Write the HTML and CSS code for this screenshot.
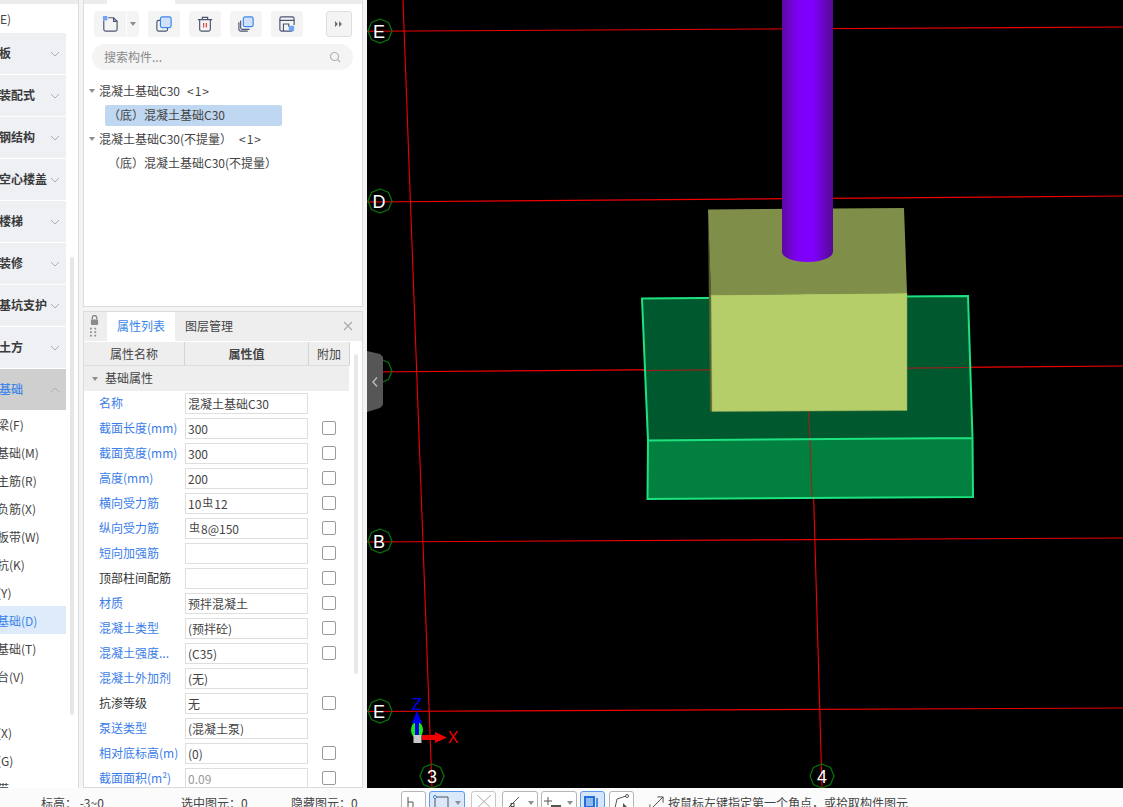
FILE: index.html
```html
<!DOCTYPE html>
<html lang="zh-CN">
<head>
<meta charset="utf-8">
<title>构件属性</title>
<link rel="stylesheet" href="styles.css">
</head>
<body>
<div class="app">
  <div class="main">
    <aside class="nav">
      <div class="nav-top"></div>
      <div class="nav-first">(E)</div>
      <div class="group"><span>板</span><svg class="chev" viewBox="0 0 10 6"><path d="M1 1l4 4 4-4"/></svg></div>
      <div class="group"><span>装配式</span><svg class="chev" viewBox="0 0 10 6"><path d="M1 1l4 4 4-4"/></svg></div>
      <div class="group"><span>钢结构</span><svg class="chev" viewBox="0 0 10 6"><path d="M1 1l4 4 4-4"/></svg></div>
      <div class="group"><span>空心楼盖</span><svg class="chev" viewBox="0 0 10 6"><path d="M1 1l4 4 4-4"/></svg></div>
      <div class="group"><span>楼梯</span><svg class="chev" viewBox="0 0 10 6"><path d="M1 1l4 4 4-4"/></svg></div>
      <div class="group"><span>装修</span><svg class="chev" viewBox="0 0 10 6"><path d="M1 1l4 4 4-4"/></svg></div>
      <div class="group"><span>基坑支护</span><svg class="chev" viewBox="0 0 10 6"><path d="M1 1l4 4 4-4"/></svg></div>
      <div class="group"><span>土方</span><svg class="chev" viewBox="0 0 10 6"><path d="M1 1l4 4 4-4"/></svg></div>
      <div class="group group-open"><span>基础</span><svg class="chev" viewBox="0 0 10 6"><path d="M1 5l4-4 4 4"/></svg></div>
      <div class="sub">梁(F)</div>
      <div class="sub">基础(M)</div>
      <div class="sub">主筋(R)</div>
      <div class="sub">负筋(X)</div>
      <div class="sub">板带(W)</div>
      <div class="sub">抗(K)</div>
      <div class="sub">(Y)</div>
      <div class="sub sub-active">基础(D)</div>
      <div class="sub">基础(T)</div>
      <div class="sub">台(V)</div>
      <div class="sub"></div>
      <div class="sub">(X)</div>
      <div class="sub">(G)</div>
      <div class="sub">带</div>
      <div class="nav-thumb"></div>
    </aside>

    <div class="panels">
      <section class="tree-panel">
        <div class="strip"><span class="strip-dots"></span><span class="strip-tab"></span></div>
        <div class="toolbar">
          <div class="tool tool-split">
            <span class="tool-main">
              <svg class="ico" viewBox="0 0 18 18"><path class="s" d="M2 5v10a2 2 0 0 0 2 2h11a2 2 0 0 0 2-2V6l-4-4H7"/><path class="s" d="M13 2v4h4"/><rect class="b" x="1" y="0" width="5" height="5"/></svg>
            </span>
            <span class="tool-drop"><i class="caret"></i></span>
          </div>
          <div class="tool"><svg class="ico" viewBox="0 0 18 18"><rect class="s" x="1" y="5" width="12" height="12" rx="2"/><rect class="bs" x="5" y="1" width="12" height="12" rx="2"/></svg></div>
          <div class="tool"><svg class="ico" viewBox="0 0 18 18"><path class="s" d="M3 4v11a2 2 0 0 0 2 2h8a2 2 0 0 0 2-2V4M1 4h16M6 4V1.500h6V4"/><path class="r" d="M7.500 8v5M10.500 8v5"/></svg></div>
          <div class="tool"><svg class="ico" viewBox="0 0 18 18"><path class="s" d="M1 7v8a2 2 0 0 0 2 2h8M3 5v8a2 2 0 0 0 2 2h8"/><rect class="bs" x="6" y="1" width="11" height="11" rx="2"/></svg></div>
          <div class="tool"><svg class="ico" viewBox="0 0 18 18"><path class="s" d="M15 17H3a2 2 0 0 1-2-2V3a2 2 0 0 1 2-2h12a2 2 0 0 1 2 2v7"/><path class="s" d="M1 5h16M5 17V9h6v3"/><rect class="b" x="11" y="11" width="6" height="6"/></svg></div>
          <div class="tool tool-more"><svg class="ico-more" viewBox="0 0 8 6"><path d="M0 0l3 3-3 3zM4 0l3 3-3 3z"/></svg></div>
        </div>
        <div class="search">
          <span>搜索构件...</span>
          <svg class="search-ico" viewBox="0 0 12 12"><circle cx="5.500" cy="5.500" r="4"/><path d="M8.500 8.500l2.500 2.500"/></svg>
        </div>
        <div class="tree">
          <div class="tree-row"><i class="caret tree-caret"></i>混凝土基础C30<span class="count">&lt;1&gt;</span></div>
          <div class="tree-leaf tree-leaf-on">（底）混凝土基础C30</div>
          <div class="tree-row"><i class="caret tree-caret"></i>混凝土基础C30(不提量）<span class="count">&lt;1&gt;</span></div>
          <div class="tree-leaf">（底）混凝土基础C30(不提量）</div>
        </div>
      </section>

      <section class="prop-panel">
        <div class="prop-tabs">
          <div class="lock">
            <svg class="lock-ico" viewBox="0 0 10 11"><path class="lock-arc" d="M2.500 5V3a2.500 2.500 0 0 1 5 0v2"/><rect class="lock-body" x="1" y="5" width="8" height="6" rx="1"/></svg>
            <svg class="grip" viewBox="0 0 8 10"><path d="M0 0h2v2H0zM5 0h2v2H5zM0 4h2v2H0zM5 4h2v2H5zM0 8h2v2H0zM5 8h2v2H5z"/></svg>
          </div>
          <div class="tab tab-on">属性列表</div>
          <div class="tab">图层管理</div>
          <svg class="close" viewBox="0 0 10 10"><path d="M1 1l8 8M9 1l-8 8"/></svg>
        </div>
        <div class="prop-body">
          <div class="thead">
            <div class="th th-name">属性名称</div>
            <div class="th th-val">属性值</div>
            <div class="th th-add">附加</div>
          </div>
          <div class="section"><i class="caret section-caret"></i>基础属性</div>
          <div class="row"><div class="lbl">名称</div><div class="val">混凝土基础C30</div></div>
          <div class="row"><div class="lbl">截面长度(mm)</div><div class="val">300</div><i class="chk"></i></div>
          <div class="row"><div class="lbl">截面宽度(mm)</div><div class="val">300</div><i class="chk"></i></div>
          <div class="row"><div class="lbl">高度(mm)</div><div class="val">200</div><i class="chk"></i></div>
          <div class="row"><div class="lbl">横向受力筋</div><div class="val">10<span class="rebar">虫</span>12</div><i class="chk"></i></div>
          <div class="row"><div class="lbl">纵向受力筋</div><div class="val"><span class="rebar">虫</span>8@150</div><i class="chk"></i></div>
          <div class="row"><div class="lbl">短向加强筋</div><div class="val"></div><i class="chk"></i></div>
          <div class="row"><div class="lbl lbl-dark">顶部柱间配筋</div><div class="val"></div><i class="chk"></i></div>
          <div class="row"><div class="lbl">材质</div><div class="val">预拌混凝土</div><i class="chk"></i></div>
          <div class="row"><div class="lbl">混凝土类型</div><div class="val">(预拌砼)</div><i class="chk"></i></div>
          <div class="row"><div class="lbl">混凝土强度...</div><div class="val">(C35)</div><i class="chk"></i></div>
          <div class="row"><div class="lbl">混凝土外加剂</div><div class="val">(无)</div></div>
          <div class="row"><div class="lbl lbl-dark">抗渗等级</div><div class="val">无</div><i class="chk"></i></div>
          <div class="row"><div class="lbl">泵送类型</div><div class="val">(混凝土泵)</div></div>
          <div class="row"><div class="lbl">相对底标高(m)</div><div class="val">(0)</div><i class="chk"></i></div>
          <div class="row"><div class="lbl">截面面积(m²)</div><div class="val val-off">0.09</div><i class="chk"></i></div>
          <div class="prop-thumb"></div>
        </div>
      </section>
    </div>

    <div class="view">
      <svg class="scene" viewBox="367 0 756 788">
        <defs>
          <linearGradient id="cyl" x1="0" x2="1" y1="0" y2="0">
            <stop offset="0" stop-color="#5d0a9e"/>
            <stop offset="0.3" stop-color="#7d00f5"/>
            <stop offset="0.6" stop-color="#8000ff"/>
            <stop offset="1" stop-color="#570a92"/>
          </linearGradient>
        </defs>
        <g class="grid">
          <path d="M367 31.300L1123 27"/>
          <path d="M367 202L1123 196"/>
          <path d="M367 372L1123 366"/>
          <path d="M367 542L1123 538"/>
          <path d="M367 711.500L1123 708"/>
          <path d="M403 0L432 788"/>
          <path d="M808 300L822 788"/>
        </g>
        <polygon class="ring" points="380,19 388.500,22.500 392,31 388.500,39.500 380,43 371.500,39.500 368,31 371.500,22.500"/>
        <polygon class="ring" points="380,189 388.500,192.500 392,201 388.500,209.500 380,213 371.500,209.500 368,201 371.500,192.500"/>
        <polygon class="ring" points="380,359 388.500,362.500 392,371 388.500,379.500 380,383 371.500,379.500 368,371 371.500,362.500"/>
        <polygon class="ring" points="380,529 388.500,532.500 392,541 388.500,549.500 380,553 371.500,549.500 368,541 371.500,532.500"/>
        <polygon class="ring" points="380,699 388.500,702.500 392,711 388.500,719.500 380,723 371.500,719.500 368,711 371.500,702.500"/>
        <polygon class="ring" points="432,764 440.500,767.500 444,776 440.500,784.500 432,788 423.500,784.500 420,776 423.500,767.500"/>
        <polygon class="ring" points="822,764 830.500,767.500 834,776 830.500,784.500 822,788 813.500,784.500 810,776 813.500,767.500"/>
        <text class="axis-label" x="379" y="38">E</text>
        <text class="axis-label" x="379" y="208">D</text>
        <text class="axis-label" x="379" y="548">B</text>
        <text class="axis-label" x="379" y="718">E</text>
        <text class="axis-label" x="432" y="783">3</text>
        <text class="axis-label" x="822" y="783">4</text>

        <polygon class="fnd-top" points="642,298.500 968,296 972.500,438 648,440.500"/>
        <path class="grid-in" d="M642 370.500L972 367.500"/>
        <path class="grid-in" d="M808.500 411L810 440"/>
        <polygon class="fnd-front" points="648,440.500 972.500,438 973,497 647.500,499"/>
        <path class="grid-in" d="M810 440L812 497"/>
        <path class="fnd-edge" d="M642 298.500L968 296L972.500 438L973 497L647.500 499L648 440.500ZM648 440.500L972.500 438"/>

        <polygon class="ped-side" points="708,209.500 711,295 712,411.500 710,411.500"/>
        <polygon class="ped-top" points="708,209.500 904,208 907,293 711,295"/>
        <polygon class="ped-front" points="711,295 907,293 907,410.500 712,411.500"/>
        <path class="cylinder" d="M782 0V252a25.500 10 0 0 0 51 0V0Z" fill="url(#cyl)"/>

        <ellipse class="gizmo-green" cx="417" cy="730" rx="6" ry="8"/>
        <path class="gizmo-z" d="M415 735V723H412L417 711L422 723H419V735Z"/>
        <path class="gizmo-x" d="M422 735H435V732L447 737.500L435 743V740H422Z"/>
        <rect class="gizmo-o" x="413.500" y="735" width="8" height="8"/>
        <text class="gizmo-zt" x="417" y="710">Z</text>
        <text class="gizmo-xt" x="453" y="743">X</text>
      </svg>
      <div class="handle"><svg class="handle-ico" viewBox="0 0 6 10"><path d="M5 0.500L1 5l4 4.500"/></svg></div>
    </div>
  </div>

  <footer class="status">
    <span class="st st-a">标高：&nbsp;-3~0</span>
    <span class="st st-b">选中图元：0</span>
    <span class="st st-c">隐藏图元：0</span>
    <div class="btns">
      <div class="sb"><svg class="sb-ico" viewBox="0 0 16 16"><path d="M1 3V16M1 8h5v8"/></svg></div>
      <div class="sb sb-wide sb-on"><svg class="sb-ico" viewBox="0 0 16 16"><circle class="ring-blue" cx="0" cy="3" r="1.500"/><path d="M2 3h11v14M0 5v12"/></svg><i class="caret sb-caret"></i></div>
      <div class="sb sb-off"><svg class="sb-ico" viewBox="0 0 16 16"><path d="M0 1l14 13M14 1L0 14"/></svg></div>
      <div class="sb sb-wide"><svg class="sb-ico" viewBox="0 0 16 16"><path d="M11 3L0 14"/><rect x="3" y="9.500" width="3" height="3"/></svg><i class="caret sb-caret"></i></div>
      <div class="sb sb-wide"><svg class="sb-ico" viewBox="0 0 16 16"><path d="M-3 7h8M1 3v8"/><rect class="dark" x="4" y="11" width="10" height="4"/></svg><i class="caret sb-caret"></i></div>
      <div class="sb sb-fill"><svg class="sb-ico" viewBox="0 0 16 16"><rect class="fill-blue" x="-1" y="3" width="9" height="10"/><path class="line-blue" d="M11 4v11H4"/></svg></div>
      <div class="sb"><svg class="sb-ico" viewBox="0 0 16 16"><path d="M0 14L2 5l9-3"/><circle cx="12" cy="2" r="1.500"/><path class="dark" d="M8 9l5 5H8z"/></svg></div>
    </div>
    <svg class="hint-ico" viewBox="0 0 16 16"><path d="M1 15L15 1M9 1h6v6M1 9v6h6"/></svg>
    <span class="hint">按鼠标左键指定第一个角点，或拾取构件图元</span>
  </footer>
</div>
</body>
</html>
```
FILE: styles.css
```css
* { box-sizing: border-box; }
html, body { margin: 0; padding: 0; }
body {
  width: 1123px;
  height: 807px;
  overflow: hidden;
  background: #fff;
  font: 12px/1.2 "Noto Sans CJK SC", "Noto Sans", sans-serif;
  color: #333;
}
.app { display: flex; flex-direction: column; height: 807px; }
.main { display: flex; height: 788px; background: #f4f4f4; }

/* left navigation */
.nav {
  position: relative;
  width: 79px;
  height: 788px;
  flex: none;
  overflow: hidden;
  background: #fff;
  border-right: 1px solid #dcdcdc;
}
.nav-top { height: 4px; background: #ececec; }
.nav-first { height: 29px; line-height: 30px; margin-left: -4px; color: #444; }
.group {
  display: flex;
  align-items: center;
  justify-content: space-between;
  width: 66px;
  height: 41px;
  margin-bottom: 1px;
  padding-right: 6px;
  background: #eef0f4;
  font-weight: 700;
  color: #3a3a3a;
}
.group span { margin-left: -1px; white-space: nowrap; }
.group-open { background: #cfcfcf; color: #3f86ea; margin-bottom: 0; font-weight: 500; }
.chev { width: 10px; height: 6px; flex: none; fill: none; stroke: #a9afbd; stroke-width: 1; }
.sub { width: 66px; height: 28px; line-height: 29px; text-indent: -3px; color: #444; white-space: nowrap; }
.sub-active { background: #ddebfb; color: #3a86e8; }
.nav-thumb { position: absolute; left: 70px; top: 257px; width: 4px; height: 458px; border-radius: 2px; background: #e6e6e6; }

/* panels */
.panels { width: 280px; flex: none; margin: 0 4px; display: flex; flex-direction: column; gap: 4px; }
.tree-panel { height: 307px; flex: none; background: #fff; border: 1px solid #dcdcdc; border-top: 0; }
.strip { height: 4px; display: flex; background: #ececec; }
.strip-dots { width: 23px; }
.strip-tab { width: 68px; background: #fff; }
.toolbar { display: flex; padding: 7px 0 0 10px; height: 33px; }
.tool {
  width: 32px;
  height: 26px;
  margin-right: 9px;
  display: flex;
  align-items: center;
  justify-content: center;
  background: #f4f4f4;
  border-radius: 3px;
}
.tool-split { width: 45px; background: none; }
.tool-main { width: 32px; height: 26px; display: flex; align-items: center; justify-content: center; background: #f4f4f4; border-radius: 3px 0 0 3px; }
.tool-drop { width: 12px; height: 26px; margin-left: 1px; display: flex; align-items: center; justify-content: center; background: #f4f4f4; border-radius: 0 3px 3px 0; }
.tool-more { width: 26px; margin: 0 0 0 14px; border: 1px solid #dedede; }
.ico { width: 16px; height: 16px; overflow: visible; fill: none; }
.ico .s { fill: none; stroke: #4b5370; stroke-width: 1.300; }
.ico .b { fill: #6ea5ee; }
.ico .bs { fill: #cfe2fa; stroke: #3c85ec; stroke-width: 1.300; }
.ico .r { fill: none; stroke: #e23a3a; stroke-width: 1.300; }
.ico-more { width: 8px; height: 6px; fill: #6e6e6e; }
.caret { display: block; width: 0; height: 0; border: 3px solid transparent; border-top: 4px solid #8d8d8d; border-bottom: 0; }
.search {
  display: flex;
  align-items: center;
  justify-content: space-between;
  height: 26px;
  margin: 7px 9px 0 8px;
  padding: 0 12px;
  border-radius: 13px;
  background: #f4f4f4;
  color: #8a8a8a;
}
.search-ico { width: 12px; height: 12px; fill: none; stroke: #b4b4b4; stroke-width: 1.200; }
.tree { padding-top: 9px; }
.tree-row { display: flex; align-items: center; height: 24px; padding-left: 5px; white-space: nowrap; color: #444; }
.tree-caret { margin-right: 4px; }
.count { margin-left: 7px; letter-spacing: 1px; }
.tree-leaf { height: 24px; margin-left: 21px; width: 177px; line-height: 24px; padding-left: 3px; white-space: nowrap; color: #444; }
.tree-leaf-on { height: 21px; margin: 2px 0 1px 21px; line-height: 20px; background: #bfd7f0; border-radius: 2px; }

.prop-panel { flex: 1; min-height: 0; overflow: hidden; background: #fff; border: 1px solid #dcdcdc; }
.prop-tabs { position: relative; display: flex; height: 29px; background: #eeeeee; }
.lock { width: 23px; padding: 3px 0 0 6px; }
.lock-ico { display: block; width: 9px; height: 10px; }
.lock-arc { fill: none; stroke: #8b8b8b; stroke-width: 1.500; }
.lock-body { fill: #8b8b8b; }
.grip { display: block; width: 7px; height: 10px; margin-top: 2px; fill: #8b8b8b; }
.tab { width: 68px; line-height: 28px; text-align: center; color: #444; }
.tab-on { background: #fff; color: #3a86e8; }
.close { position: absolute; right: 9px; top: 9px; width: 10px; height: 10px; fill: none; stroke: #aaa; stroke-width: 1.200; }
.prop-body { position: relative; }
.thead { display: flex; width: 266px; height: 24px; margin-top: 1px; background: #eeeeee; border-bottom: 1px solid #ddd; }
.th { line-height: 23px; text-align: center; border-right: 1px solid #d4d4d4; color: #444; }
.th-name { width: 101px; }
.th-val { width: 124px; font-weight: 700; }
.th-add { width: 41px; }
.section { display: flex; align-items: center; width: 265px; height: 25px; padding-left: 8px; background: #eeeeee; color: #444; }
.section-caret { margin-right: 7px; }
.row { position: relative; display: flex; align-items: center; height: 25px; }
.lbl { width: 101px; padding-left: 15px; color: #3b7de8; white-space: nowrap; }
.lbl-dark { color: #333; }
.val { width: 123px; height: 21px; line-height: 19px; padding-left: 2px; background: #fff; border: 1px solid #dedede; color: #444; white-space: nowrap; }
.val-off { color: #999; }
.chk { width: 14px; height: 14px; margin-left: 14px; margin-top: -1px; border: 1px solid #9a9a9a; border-radius: 2px; background: #fff; }
.rebar { display: inline-block; width: 13px; text-align: center; position: relative; top: -2px; font-size: 11px; }
.prop-thumb { position: absolute; left: 270px; top: 12px; width: 4px; height: 320px; border-radius: 2px; background: #e8e8e8; }

/* 3D view */
.view { position: relative; flex: 1; height: 788px; background: #000; overflow: hidden; }
.scene { display: block; width: 756px; height: 788px; }
.grid { fill: none; stroke: #f00000; stroke-width: 1.100; }
.grid-in { fill: none; stroke: #b01818; stroke-width: 1; }
.ring { fill: none; stroke: #0b6f0b; stroke-width: 1.300; }
.axis-label { font: 18px "Liberation Sans", sans-serif; fill: #fff; text-anchor: middle; }
.fnd-top { fill: #00592e; }
.fnd-front { fill: #028040; }
.fnd-edge { fill: none; stroke: #1de27f; stroke-width: 2; }
.ped-side { fill: #55602f; }
.ped-top { fill: #7f8f4a; }
.ped-front { fill: #b5ce6a; stroke: #8fa553; stroke-width: 0.500; }
.gizmo-green { fill: #19e619; }
.gizmo-z, .gizmo-zt { fill: #0000f0; }
.gizmo-x, .gizmo-xt { fill: #f00000; }
.gizmo-o { fill: #c8c8c8; }
.gizmo-zt { font: 17px "Liberation Sans", sans-serif; text-anchor: middle; }
.gizmo-xt { font: 16px "Liberation Sans", sans-serif; text-anchor: middle; }
.handle {
  position: absolute;
  left: 0;
  top: 351px;
  width: 16px;
  height: 61px;
  display: flex;
  align-items: center;
  justify-content: center;
  background: #565656;
  clip-path: polygon(0 0, 13px 3px, 16px 6px, 16px 54px, 13px 57px, 0 61px);
}
.handle-ico { width: 6px; height: 10px; fill: none; stroke: #b8b8b8; stroke-width: 1.500; }

/* status bar */
.status { position: relative; display: flex; height: 19px; background: #fbfbfb; overflow: hidden; white-space: nowrap; color: #444; }
.st { line-height: 30px; height: 19px; }
.st-a { margin-left: 41px; width: 140px; }
.st-b { width: 110px; }
.st-c { width: 110px; }
.btns { position: absolute; left: 401px; top: 3px; display: flex; gap: 3px; }
.sb {
  position: relative;
  width: 25px;
  height: 26px;
  padding: 2px 0 0 5px;
  background: #fff;
  border: 1px solid #b5b5b5;
  border-radius: 3px;
}
.sb-wide { width: 36px; }
.sb-on { background: #dbe8f9; border-color: #5b9aec; }
.sb-off { margin: 0 3px; border-color: #c8c8c8; }
.sb-off .sb-ico { stroke: #aaa; }
.sb-fill { margin-right: 1px; background: #d6e6fa; border-color: #5b9aec; }
.sb-ico { display: block; width: 16px; height: 16px; fill: none; stroke: #555; stroke-width: 1; overflow: visible; }
.sb-ico .ring-blue { fill: #fff; stroke: #2f7de0; }
.sb-ico .dark { fill: #555; stroke: none; }
.sb-ico .fill-blue { fill: #8fb9ee; stroke: #1f6fdc; stroke-width: 2; }
.sb-ico .line-blue { stroke: #1f6fdc; stroke-width: 1.500; }
.sb-caret { position: absolute; right: 3px; top: 9px; }
.hint-ico { position: absolute; left: 649px; top: 8px; width: 15px; height: 15px; fill: none; stroke: #444; stroke-width: 1; }
.hint { position: absolute; left: 668px; top: 0; line-height: 30px; height: 19px; }
```
